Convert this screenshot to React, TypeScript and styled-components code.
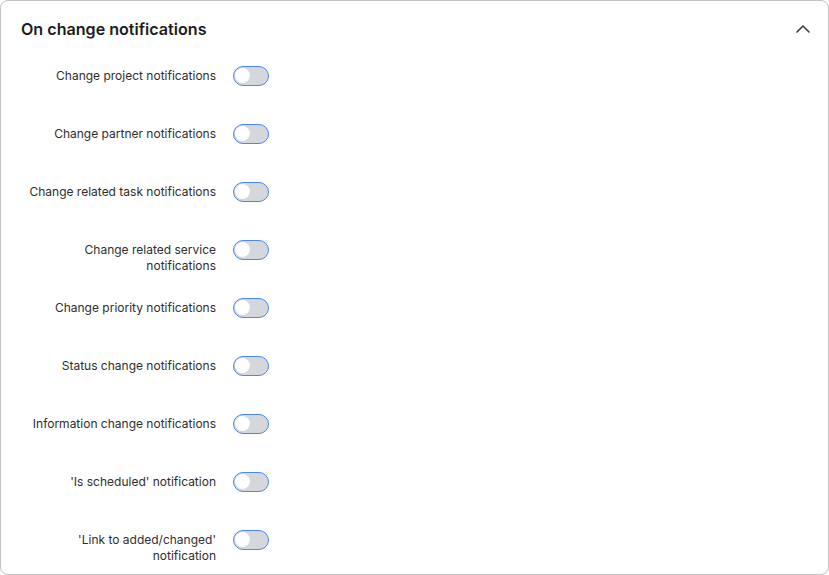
import React from "react";
import styled, { createGlobalStyle } from "styled-components";

const Global = createGlobalStyle`
  html, body { margin: 0; padding: 0; background: #ffffff; }
  body { font-family: Inter, "Noto Sans", sans-serif; }
  * { box-sizing: border-box; }
`;

const Card = styled.section`
  width: 829px;
  height: 575px;
  border: 1px solid #c2c2c2;
  border-radius: 8px;
  background: #fff;
  display: flex;
  flex-direction: column;
  overflow: hidden;
`;

const Header = styled.header`
  flex: none;
  height: 56px;
  display: flex;
  align-items: center;
  justify-content: space-between;
  padding: 0 16px 0 20px;
`;

const Title = styled.h2`
  margin: 0;
  font-size: 16.1px;
  font-weight: 600;
  color: #1c1c1c;
`;

const Collapse = styled.button`
  border: 0;
  background: transparent;
  padding: 0;
  width: 18px;
  height: 18px;
  display: flex;
  align-items: center;
  justify-content: center;
  cursor: pointer;
`;

const List = styled.div`
  flex: none;
  display: flex;
  flex-direction: column;
  padding: 9px 0 0 16px;
`;

const Row = styled.div`
  flex: none;
  height: 58px;
  display: flex;
  align-items: flex-start;
  gap: 17px;
`;

const Label = styled.label`
  width: 199px;
  margin-top: 2px;
  text-align: right;
  font-size: 12px;
  line-height: 16px;
  color: #2e2e2e;
`;

const Track = styled.span<{ $on: boolean }>`
  position: relative;
  display: inline-block;
  width: 36px;
  height: 20px;
  border-radius: 10px;
  border: 1.5px solid #4b87f0;
  background: ${(p) => (p.$on ? "#4b87f0" : "#d4d7dc")};
  flex: none;
`;

const Knob = styled.span<{ $on: boolean }>`
  position: absolute;
  top: 1px;
  left: ${(p) => (p.$on ? "17px" : "1px")};
  width: 15px;
  height: 15px;
  border-radius: 50%;
  background: #ffffff;
`;

const items = [
  "Change project notifications",
  "Change partner notifications",
  "Change related task notifications",
  "Change related service notifications",
  "Change priority notifications",
  "Status change notifications",
  "Information change notifications",
  "'Is scheduled' notification",
  "'Link to added/changed' notification",
];

function Toggle({ on }: { on: boolean }) {
  return (
    <Track $on={on} role="switch" aria-checked={on}>
      <Knob $on={on} />
    </Track>
  );
}

export default function App() {
  return (
    <>
      <Global />
      <Card>
        <Header>
          <Title>On change notifications</Title>
          <Collapse aria-label="Collapse">
            <svg width="16" height="10" viewBox="0 0 16 10" fill="none">
              <polyline
                points="2,8 8,2 14,8"
                stroke="#3a3a3a"
                strokeWidth="1.6"
                strokeLinecap="round"
                strokeLinejoin="round"
              />
            </svg>
          </Collapse>
        </Header>
        <List>
          {items.map((t) => (
            <Row key={t}>
              <Label>{t}</Label>
              <Toggle on={false} />
            </Row>
          ))}
        </List>
      </Card>
    </>
  );
}
